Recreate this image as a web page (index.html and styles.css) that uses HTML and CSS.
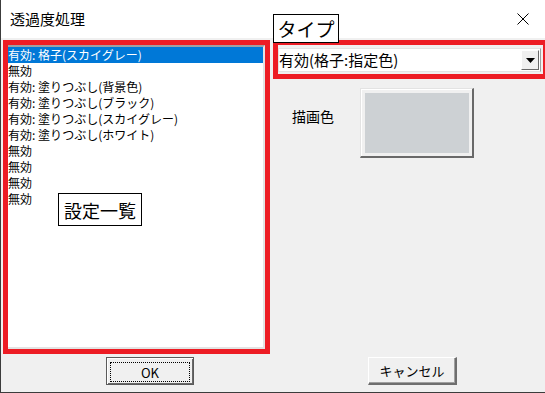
FILE: index.html
```html
<!DOCTYPE html>
<html lang="ja">
<head>
    <meta charset="UTF-8">
    <meta name="viewport" content="width=device-width, initial-scale=1.0">
    <title>透過度処理</title>
    <link rel="stylesheet" href="styles.css">
</head>
<body>
    <div class="dialog">
        <div class="titlebar">
            <span class="title">透過度処理</span>
            <svg class="close" width="12" height="12" viewBox="0 0 12 12">
                <path d="M0.5 0.5 L11.5 11.5 M11.5 0.5 L0.5 11.5" stroke="#000" stroke-width="1" fill="none"/>
            </svg>
        </div>

        <div class="main">
            <div class="list-frame">
                <ul class="listbox">
                    <li class="selected">有効: 格子(スカイグレー)</li>
                    <li>無効</li>
                    <li>有効: 塗りつぶし(背景色)</li>
                    <li>有効: 塗りつぶし(ブラック)</li>
                    <li>有効: 塗りつぶし(スカイグレー)</li>
                    <li>有効: 塗りつぶし(ホワイト)</li>
                    <li>無効</li>
                    <li>無効</li>
                    <li>無効</li>
                    <li>無効</li>
                </ul>
            </div>

            <div class="right-col">
                <div class="type-frame">
                    <div class="combo">
                        <span class="combo-text">有効(格子:指定色)</span>
                        <span class="combo-btn">
                            <svg width="9" height="5" viewBox="0 0 9 5"><path d="M0 0 H9 L4.5 5 Z" fill="#000"/></svg>
                        </span>
                    </div>
                </div>
                <div class="color-row">
                    <span class="color-label">描画色</span>
                    <div class="swatch"><div class="swatch-fill"></div></div>
                </div>
            </div>
        </div>

        <div class="buttons">
            <button class="btn btn-default"><span class="focus">OK</span></button>
            <button class="btn btn-cancel">キャンセル</button>
        </div>

        <!-- annotation labels -->
        <div class="caption caption-type">タイプ</div>
        <div class="caption caption-list">設定一覧</div>
    </div>
</body>
</html>
```

FILE: styles.css
```css
body {
    margin: 0;
    overflow: hidden;
    background-color: #f0f0f0;
}

.dialog {
    position: relative;
    width: 545px;
    height: 393px;
    box-sizing: border-box;
    background-color: #f0f0f0;
    border-left: 1px solid #3c3c3c;
    border-bottom: 1px solid #3c3c3c;
    font-family: "Noto Sans CJK JP", sans-serif;
    color: #000;
    overflow: hidden;
}

.titlebar {
    height: 38px;
    background-color: #fff;
    display: flex;
    align-items: center;
    justify-content: space-between;
    padding: 0 16px 0 9px;
}

.title {
    font-size: 15px;
    line-height: 18px;
}

.main {
    display: flex;
    margin-top: 2px;
    height: 314px;
}

.list-frame {
    margin-left: 2px;
    width: 267px;
    height: 314px;
    box-sizing: border-box;
    border: 5px solid #ed1c24;
}

.listbox {
    list-style: none;
    margin: 0;
    padding: 0;
    height: 100%;
    box-sizing: border-box;
    background-color: #fff;
    border-top: 2px solid #a0a0a0;
    border-right: 2px solid #e3e3e3;
    border-bottom: 2px solid #e3e3e3;
}

.listbox li {
    height: 16px;
    font-size: 12px;
    line-height: 16px;
    white-space: nowrap;
}

.listbox li.selected {
    background-color: #0078d7;
    color: #fff;
}

.right-col {
    margin-left: 3px;
    width: 272px;
}

.type-frame {
    width: 275px;
    height: 39px;
    box-sizing: border-box;
    border: 5px solid #ed1c24;
    padding-top: 3px;
}

.combo {
    width: 263px;
    height: 24px;
    box-sizing: border-box;
    background-color: #fff;
    border: 1px solid #e3e3e3;
    border-right-color: #a0a0a0;
    display: flex;
    align-items: center;
    justify-content: space-between;
}

.combo-text {
    font-size: 15px;
    line-height: 18px;
}

.combo-btn {
    width: 18px;
    height: 20px;
    margin-right: 1px;
    box-sizing: border-box;
    background-color: #f0f0f0;
    border: 1px solid #fff;
    border-right-color: #696969;
    border-bottom-color: #696969;
    display: flex;
    align-items: center;
    justify-content: center;
}

.combo-btn svg {
    display: block;
}

.color-row {
    display: flex;
    align-items: flex-start;
    margin-top: 9px;
}

.color-label {
    margin: 19px 0 0 19px;
    width: 68px;
    font-size: 14px;
    line-height: 18px;
}

.swatch {
    width: 114px;
    height: 70px;
    box-sizing: border-box;
    border: 1px solid #e3e3e3;
    border-right: 2px solid #696969;
    border-bottom: 2px solid #696969;
    box-shadow: inset 1px 1px #fff;
    padding: 4px 3px 3px 4px;
}

.swatch-fill {
    height: 100%;
    background-color: #cdd1d4;
}

.buttons {
    display: flex;
    margin-top: 3px;
}

.btn {
    height: 28px;
    box-sizing: border-box;
    background-color: #f0f0f0;
    font-family: "Noto Sans CJK JP", sans-serif;
    font-size: 13px;
    color: #000;
    padding: 0;
    display: flex;
    align-items: center;
    justify-content: center;
}

.btn-default {
    margin-left: 105px;
    width: 88px;
    border: 1px solid #5a5a5a;
    box-shadow: inset 1px 1px #fff, inset -1px -1px #696969;
    padding: 4px 3px 2px 3px;
}

.focus {
    flex: 1;
    align-self: stretch;
    border: 1px dotted #000;
    display: flex;
    align-items: center;
    justify-content: center;
}

.btn-cancel {
    margin-left: 174px;
    width: 89px;
    border: 1px solid #fff;
    border-right: 2px solid #6e6e6e;
    border-bottom: 2px solid #6e6e6e;
    box-shadow: inset -1px -1px #a0a0a0;
}

.caption {
    position: absolute;
    box-sizing: border-box;
    background-color: #fff;
    border: 1px solid #000;
    font-size: 18px;
    line-height: 20px;
    display: flex;
    align-items: center;
    justify-content: center;
}

.caption-type {
    left: 272px;
    top: 14px;
    width: 66px;
    height: 29px;
    font-size: 19px;
}

.caption-list {
    left: 57px;
    top: 193px;
    width: 84px;
    height: 33px;
}
```
